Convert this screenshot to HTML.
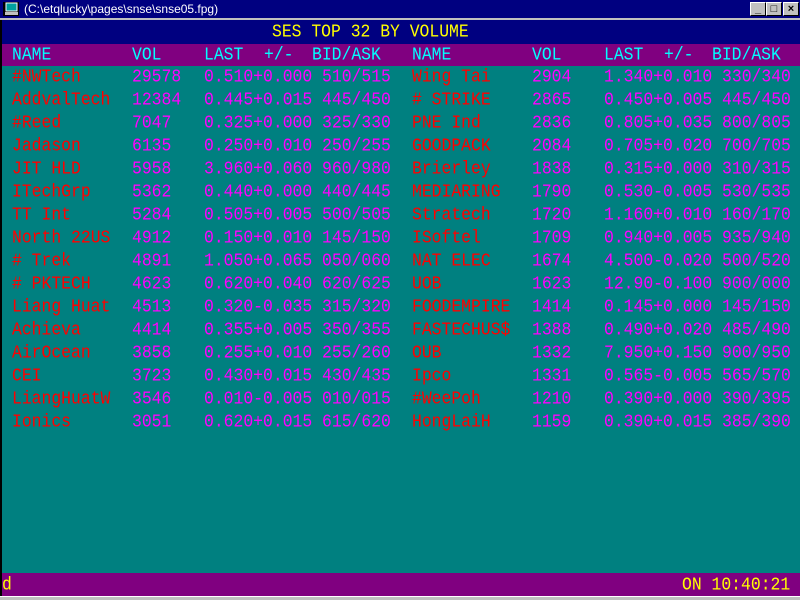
<!DOCTYPE html>
<html><head><meta charset="utf-8"><style>
*{margin:0;padding:0;box-sizing:border-box}
body{width:800px;height:600px;overflow:hidden;background:#c0c0c0;position:relative;font-family:"Liberation Mono",monospace}
.tb{position:absolute;left:0;top:0;width:800px;height:18px;background:#000080}
.tt{position:absolute;left:24px;top:2px;color:#fff;font:12px "Liberation Sans",sans-serif;line-height:14px}
.btn{position:absolute;top:2px;width:16px;height:14px;background:#c0c0c0;border:1px solid;border-color:#fff #000 #000 #fff;font:bold 11px "Liberation Sans",sans-serif;text-align:center;line-height:12px;color:#000}
.cl{position:absolute;left:0;top:20px;width:800px;height:576px;background:#008080;border-left:2px solid #000}
.hd{position:absolute;left:2px;top:20px;width:798px;height:24px;background:#000080}
.ph{position:absolute;left:2px;top:44px;width:798px;height:22px;background:#800080}
.st{position:absolute;left:2px;top:573px;width:798px;height:23px;background:#800080}
.t{position:absolute;white-space:pre;font-size:16.4px;line-height:22px;height:22px;transform:scaleY(1.12);transform-origin:50% 50%}
.y{color:#ffff00}.c{color:#00ffff}.r{color:#ff0000}.m{color:#ff00ff}
</style></head><body>
<div class="tb"></div>
<svg style="position:absolute;left:3px;top:2px" width="16" height="14"><rect x="0" y="0" width="16" height="14" fill="#000"/><rect x="3" y="1" width="11" height="8" fill="#00a0a0" stroke="#fff" stroke-width="1"/><rect x="2" y="10" width="13" height="3" fill="#c0c0c0"/></svg>
<div class="tt">(C:\etqlucky\pages\snse\snse05.fpg)</div>
<div class="btn" style="left:750px">_</div>
<div class="btn" style="left:766px">□</div>
<div class="btn" style="left:783px">×</div>
<div class="cl"></div><div class="hd"></div><div class="ph"></div><div class="st"></div>
<div class="t y" style="left:272px;top:21px">SES TOP 32 BY VOLUME</div>
<div class="t c" style="left:12px;top:44px">NAME</div><div class="t c" style="left:132px;top:44px">VOL</div><div class="t c" style="left:204px;top:44px">LAST</div><div class="t c" style="left:264px;top:44px">+/-</div><div class="t c" style="left:312px;top:44px">BID/ASK</div>
<div class="t c" style="left:412px;top:44px">NAME</div><div class="t c" style="left:532px;top:44px">VOL</div><div class="t c" style="left:604px;top:44px">LAST</div><div class="t c" style="left:664px;top:44px">+/-</div><div class="t c" style="left:712px;top:44px">BID/ASK</div>
<div id="rows"></div>
<div class="t y" style="left:2px;top:574px">d</div>
<div class="t y" style="left:682px;top:574px">ON 10:40:21</div>
<div style="position:absolute;left:0;top:596px;width:800px;height:4px;background:#c0c0c0;border-top:1px solid #fff"></div>
<!-- rows -->
<div class="t r" style="left:12px;top:66px">#NWTech</div><div class="t m" style="left:132px;top:66px">29578</div><div class="t m" style="left:204px;top:66px">0.510+0.000 510/515</div>
<div class="t r" style="left:12px;top:89px">AddvalTech</div><div class="t m" style="left:132px;top:89px">12384</div><div class="t m" style="left:204px;top:89px">0.445+0.015 445/450</div>
<div class="t r" style="left:12px;top:112px">#Reed</div><div class="t m" style="left:132px;top:112px">7047</div><div class="t m" style="left:204px;top:112px">0.325+0.000 325/330</div>
<div class="t r" style="left:12px;top:135px">Jadason</div><div class="t m" style="left:132px;top:135px">6135</div><div class="t m" style="left:204px;top:135px">0.250+0.010 250/255</div>
<div class="t r" style="left:12px;top:158px">JIT HLD</div><div class="t m" style="left:132px;top:158px">5958</div><div class="t m" style="left:204px;top:158px">3.960+0.060 960/980</div>
<div class="t r" style="left:12px;top:181px">ITechGrp</div><div class="t m" style="left:132px;top:181px">5362</div><div class="t m" style="left:204px;top:181px">0.440+0.000 440/445</div>
<div class="t r" style="left:12px;top:204px">TT Int</div><div class="t m" style="left:132px;top:204px">5284</div><div class="t m" style="left:204px;top:204px">0.505+0.005 500/505</div>
<div class="t r" style="left:12px;top:227px">North 22US</div><div class="t m" style="left:132px;top:227px">4912</div><div class="t m" style="left:204px;top:227px">0.150+0.010 145/150</div>
<div class="t r" style="left:12px;top:250px"># Trek</div><div class="t m" style="left:132px;top:250px">4891</div><div class="t m" style="left:204px;top:250px">1.050+0.065 050/060</div>
<div class="t r" style="left:12px;top:273px"># PKTECH</div><div class="t m" style="left:132px;top:273px">4623</div><div class="t m" style="left:204px;top:273px">0.620+0.040 620/625</div>
<div class="t r" style="left:12px;top:296px">Liang Huat</div><div class="t m" style="left:132px;top:296px">4513</div><div class="t m" style="left:204px;top:296px">0.320-0.035 315/320</div>
<div class="t r" style="left:12px;top:319px">Achieva</div><div class="t m" style="left:132px;top:319px">4414</div><div class="t m" style="left:204px;top:319px">0.355+0.005 350/355</div>
<div class="t r" style="left:12px;top:342px">AirOcean</div><div class="t m" style="left:132px;top:342px">3858</div><div class="t m" style="left:204px;top:342px">0.255+0.010 255/260</div>
<div class="t r" style="left:12px;top:365px">CEI</div><div class="t m" style="left:132px;top:365px">3723</div><div class="t m" style="left:204px;top:365px">0.430+0.015 430/435</div>
<div class="t r" style="left:12px;top:388px">LiangHuatW</div><div class="t m" style="left:132px;top:388px">3546</div><div class="t m" style="left:204px;top:388px">0.010-0.005 010/015</div>
<div class="t r" style="left:12px;top:411px">Ionics</div><div class="t m" style="left:132px;top:411px">3051</div><div class="t m" style="left:204px;top:411px">0.620+0.015 615/620</div>

<div class="t r" style="left:412px;top:66px">Wing Tai</div><div class="t m" style="left:532px;top:66px">2904</div><div class="t m" style="left:604px;top:66px">1.340+0.010 330/340</div>
<div class="t r" style="left:412px;top:89px"># STRIKE</div><div class="t m" style="left:532px;top:89px">2865</div><div class="t m" style="left:604px;top:89px">0.450+0.005 445/450</div>
<div class="t r" style="left:412px;top:112px">PNE Ind</div><div class="t m" style="left:532px;top:112px">2836</div><div class="t m" style="left:604px;top:112px">0.805+0.035 800/805</div>
<div class="t r" style="left:412px;top:135px">GOODPACK</div><div class="t m" style="left:532px;top:135px">2084</div><div class="t m" style="left:604px;top:135px">0.705+0.020 700/705</div>
<div class="t r" style="left:412px;top:158px">Brierley</div><div class="t m" style="left:532px;top:158px">1838</div><div class="t m" style="left:604px;top:158px">0.315+0.000 310/315</div>
<div class="t r" style="left:412px;top:181px">MEDIARING</div><div class="t m" style="left:532px;top:181px">1790</div><div class="t m" style="left:604px;top:181px">0.530-0.005 530/535</div>
<div class="t r" style="left:412px;top:204px">Stratech</div><div class="t m" style="left:532px;top:204px">1720</div><div class="t m" style="left:604px;top:204px">1.160+0.010 160/170</div>
<div class="t r" style="left:412px;top:227px">ISoftel</div><div class="t m" style="left:532px;top:227px">1709</div><div class="t m" style="left:604px;top:227px">0.940+0.005 935/940</div>
<div class="t r" style="left:412px;top:250px">NAT ELEC</div><div class="t m" style="left:532px;top:250px">1674</div><div class="t m" style="left:604px;top:250px">4.500-0.020 500/520</div>
<div class="t r" style="left:412px;top:273px">UOB</div><div class="t m" style="left:532px;top:273px">1623</div><div class="t m" style="left:604px;top:273px">12.90-0.100 900/000</div>
<div class="t r" style="left:412px;top:296px">FOODEMPIRE</div><div class="t m" style="left:532px;top:296px">1414</div><div class="t m" style="left:604px;top:296px">0.145+0.000 145/150</div>
<div class="t r" style="left:412px;top:319px">FASTECHUS$</div><div class="t m" style="left:532px;top:319px">1388</div><div class="t m" style="left:604px;top:319px">0.490+0.020 485/490</div>
<div class="t r" style="left:412px;top:342px">OUB</div><div class="t m" style="left:532px;top:342px">1332</div><div class="t m" style="left:604px;top:342px">7.950+0.150 900/950</div>
<div class="t r" style="left:412px;top:365px">Ipco</div><div class="t m" style="left:532px;top:365px">1331</div><div class="t m" style="left:604px;top:365px">0.565-0.005 565/570</div>
<div class="t r" style="left:412px;top:388px">#WeePoh</div><div class="t m" style="left:532px;top:388px">1210</div><div class="t m" style="left:604px;top:388px">0.390+0.000 390/395</div>
<div class="t r" style="left:412px;top:411px">HongLaiH</div><div class="t m" style="left:532px;top:411px">1159</div><div class="t m" style="left:604px;top:411px">0.390+0.015 385/390</div>
</body></html>
